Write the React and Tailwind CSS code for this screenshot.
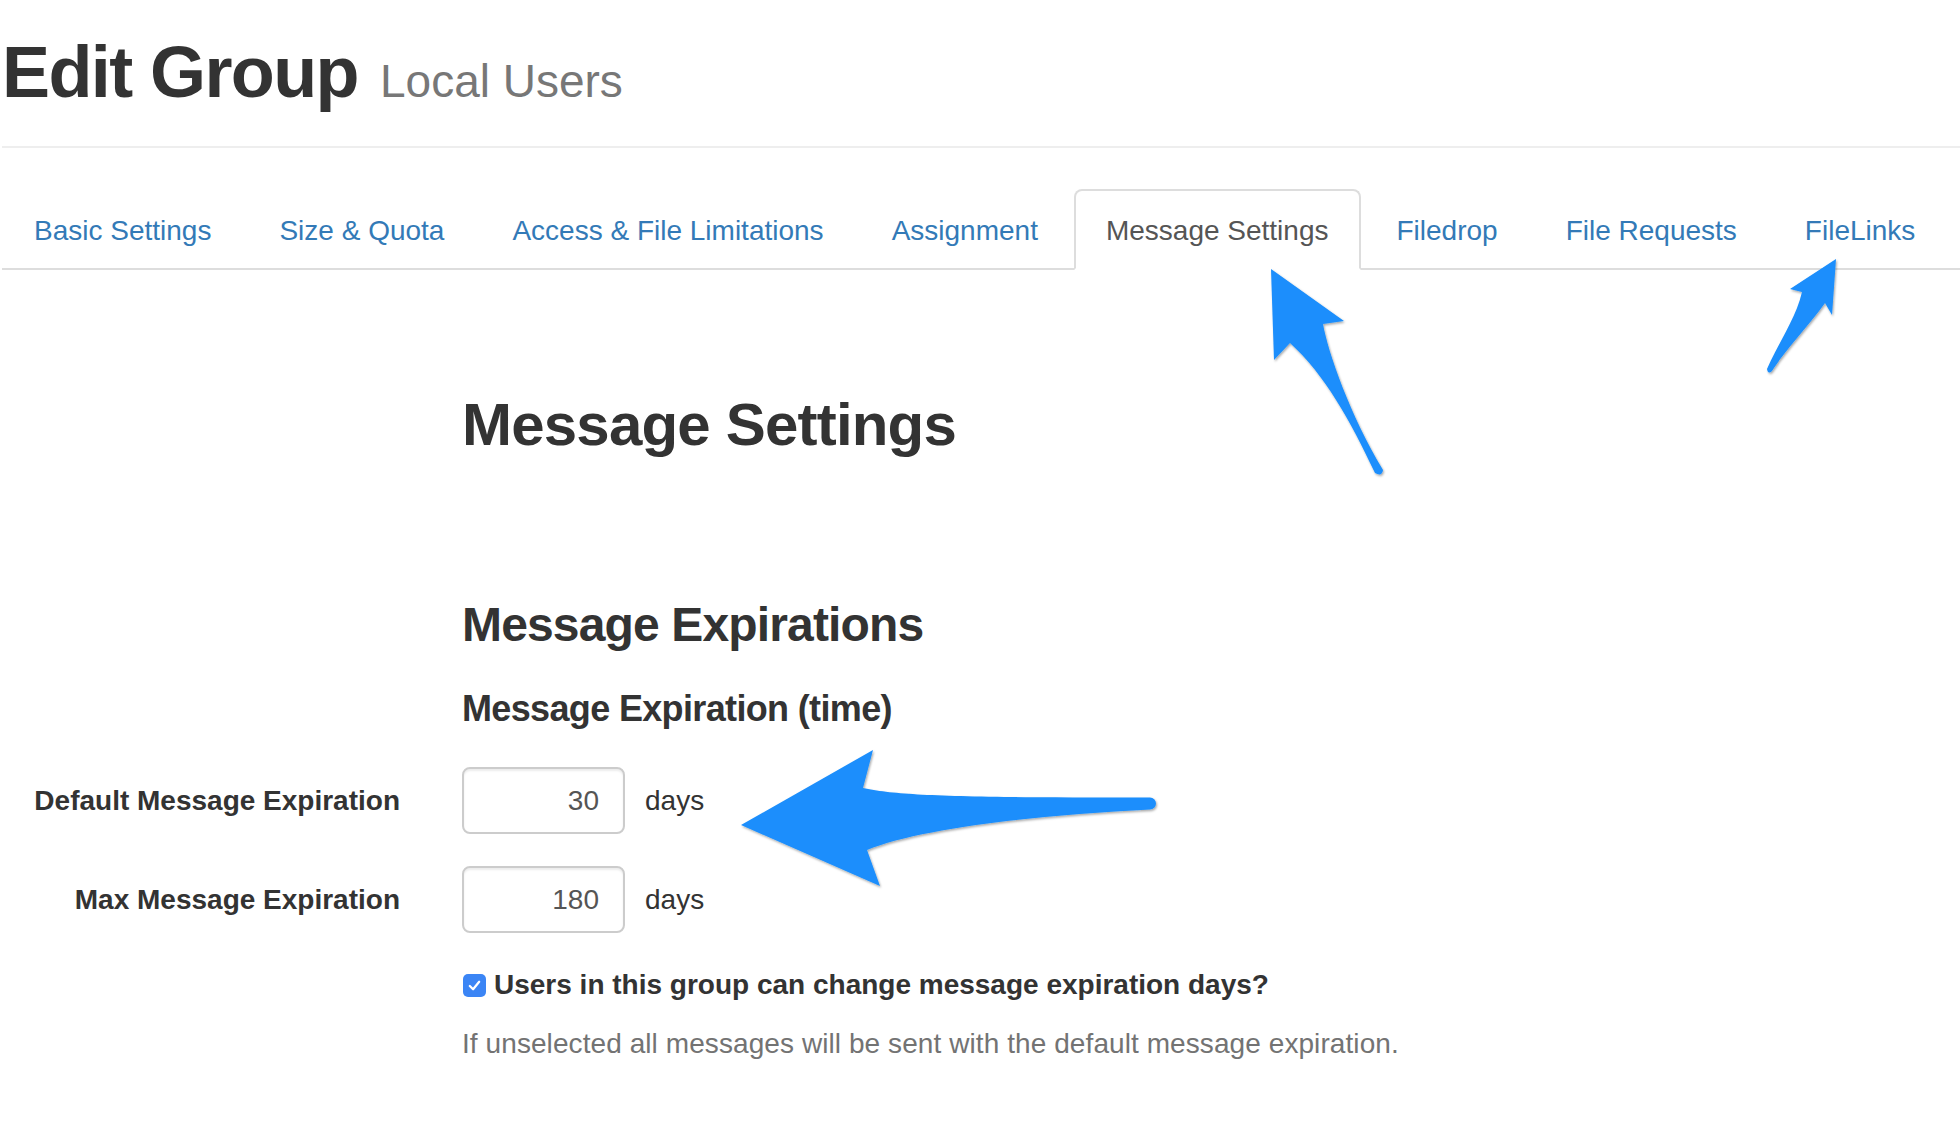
import React from "react";

const tabs = [
  "Basic Settings",
  "Size & Quota",
  "Access & File Limitations",
  "Assignment",
  "Message Settings",
  "Filedrop",
  "File Requests",
  "FileLinks",
];

function Arrows() {
  return (
    <svg
      className="absolute top-0 left-0 pointer-events-none"
      width="1960"
      height="1134"
      viewBox="0 0 1960 1134"
    >
      <defs>
        <filter id="sh" x="-20%" y="-20%" width="140%" height="140%">
          <feDropShadow dx="1" dy="1.5" stdDeviation="1" floodColor="#000" floodOpacity="0.35" />
        </filter>
      </defs>
      <g fill="#1b8efc" filter="url(#sh)">
        <path d="M1271,269 L1344,321 L1323,324 C1328,352 1350,415 1383,470 Q1382,477 1375,473 C1350,420 1325,375 1290,343 L1274,360 Z" />
        <path d="M1836,259 L1832,315 L1825,303 C1808,327 1785,350 1772,371 Q1768,375 1767,369 C1780,340 1796,318 1802,292 L1790,289 Z" />
        <path d="M741,825 L873,750 L863,788 C900,796 960,797.5 1150,797.5 A6,6 0 0 1 1150,809.5 C1040,815 920,828 867,850 L880,886 Z" />
      </g>
    </svg>
  );
}

export default function App() {
  return (
    <div className="relative w-[1960px] h-[1134px] bg-white overflow-hidden font-['Liberation_Sans',Arial,sans-serif] text-[#333]">
      <div className="pl-[2px]">
        <div className="pt-[36px]">
          <h1 className="flex items-baseline gap-[22px] text-[72px] leading-[72px] font-bold tracking-[-1.6px] text-[#333]">
            <span>Edit Group</span>
            <small className="text-[46px] leading-[46px] font-normal tracking-normal text-[#777]">
              Local Users
            </small>
          </h1>
        </div>
        <div className="mt-[38px] border-b-2 border-[#eee]" />

        <nav className="mt-[41px] flex border-b-2 border-[#ddd]">
          {tabs.map((t) => {
            const active = t === "Message Settings";
            return (
              <div key={t} className="-mb-[2px] mr-[4px]">
                <a
                  className={
                    active
                      ? "block border-2 border-[#ddd] border-b-white bg-white rounded-t-[8px] px-[30px] pt-[20px] pb-[17px] text-[28px] leading-[40px] text-[#555]"
                      : "block border-2 border-transparent rounded-t-[8px] px-[30px] pt-[20px] pb-[17px] text-[28px] leading-[40px] text-[#337ab7]"
                  }
                >
                  {t}
                </a>
              </div>
            );
          })}
        </nav>

        <div className="ml-[460px]">
          <h2 className="mt-[125px] text-[60px] leading-[60px] font-bold tracking-[-0.8px]">
            Message Settings
          </h2>
          <h3 className="mt-[146px] text-[48px] leading-[48px] font-bold tracking-[-0.85px]">
            Message Expirations
          </h3>
          <h4 className="mt-[42px] text-[36px] leading-[36px] font-bold tracking-[-0.65px]">
            Message Expiration (time)
          </h4>
        </div>

        <div className="mt-[40px] flex flex-col gap-[32px]">
          {[
            ["Default Message Expiration", "30"],
            ["Max Message Expiration", "180"],
          ].map(([label, val]) => (
            <div key={label} className="flex items-center h-[67px]">
              <label className="w-[398px] text-right text-[28px] leading-[28px] font-bold">
                {label}
              </label>
              <input
                readOnly
                value={val}
                className="ml-[62px] w-[163px] h-[67px] border-2 border-[#ccc] rounded-[8px] px-[24px] text-right text-[28px] text-[#555] shadow-[inset_0_2px_2px_rgba(0,0,0,0.075)] outline-none"
              />
              <span className="ml-[20px] text-[28px] leading-[28px]">days</span>
            </div>
          ))}
        </div>

        <div className="mt-[38px] ml-[461px] flex items-center h-[28px] gap-[8px]">
          <span className="w-[23px] h-[23px] rounded-[5px] bg-[#3b85f5] flex items-center justify-center">
            <svg width="15" height="15" viewBox="0 0 16 16" fill="none">
              <path d="M3 8.5 L6.5 12 L13 4" stroke="#fff" strokeWidth="2.4" strokeLinecap="round" strokeLinejoin="round" />
            </svg>
          </span>
          <span className="text-[28px] leading-[28px] font-bold">
            Users in this group can change message expiration days?
          </span>
        </div>

        <p className="mt-[31px] ml-[460px] text-[28px] leading-[28px] text-[#737373] tracking-[0.08px]">
          If unselected all messages will be sent with the default message expiration.
        </p>
      </div>
      <Arrows />
    </div>
  );
}
